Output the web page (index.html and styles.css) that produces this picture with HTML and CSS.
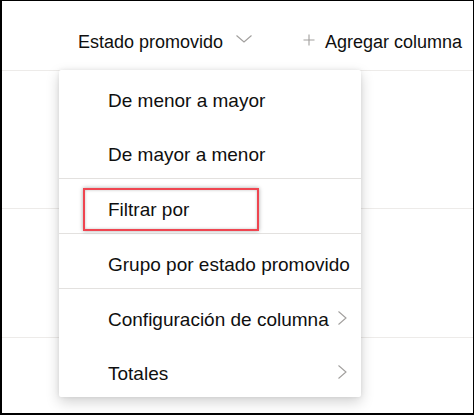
FILE: index.html
```html
<!DOCTYPE html>
<html lang="es">
<head>
<meta charset="utf-8">
<link rel="stylesheet" href="styles.css">
</head>
<body>
<div class="frame">
  <div class="header">
    <div class="col-title">Estado promovido</div>
    <svg class="chev-down" width="16" height="8" viewBox="0 0 16 8"><polyline points="0.5,0.5 8,7 15.5,0.5" fill="none" stroke="#a19f9d" stroke-width="1.1"/></svg>
    <svg class="plus" width="12" height="12" viewBox="0 0 12 12"><path d="M6 0.5V11.5M0.5 6H11.5" fill="none" stroke="#a19f9d" stroke-width="1.1"/></svg>
    <div class="add-col">Agregar columna</div>
  </div>
  <div class="row row-a"></div>
  <div class="row row-b"></div>

  <div class="menu">
    <div class="section">
      <div class="item">De menor a mayor</div>
      <div class="item">De mayor a menor</div>
    </div>
    <div class="section">
      <div class="item">Filtrar por</div>
    </div>
    <div class="section">
      <div class="item">Grupo por estado promovido</div>
    </div>
    <div class="section">
      <div class="item">Configuración de columna<svg class="chev-right" width="9" height="14" viewBox="0 0 9 14"><polyline points="0.5,0.5 8,7 0.5,13.5" fill="none" stroke="#a19f9d" stroke-width="1.1"/></svg></div>
      <div class="item">Totales<svg class="chev-right" width="9" height="14" viewBox="0 0 9 14"><polyline points="0.5,0.5 8,7 0.5,13.5" fill="none" stroke="#a19f9d" stroke-width="1.1"/></svg></div>
    </div>
  </div>
  <div class="highlight"></div>
</div>
</body>
</html>
```
FILE: styles.css
```css
* { box-sizing: border-box; }
html, body { margin: 0; padding: 0; background: #fff; }
body {
  font-family: "Liberation Sans", Arial, sans-serif;
  color: #0f0f0f;
}
.frame {
  position: relative;
  width: 474px;
  height: 415px;
  border-style: solid;
  border-color: #000;
  border-width: 1px 1px 2px 2px;
  overflow: hidden;
  background: #fff;
}
.header {
  height: 70px;
  border-bottom: 1px solid #edebe9;
  display: flex;
  align-items: flex-start;
  padding-top: 31px;
  padding-left: 76px;
  font-size: 18px;
  white-space: nowrap;
}
.col-title {
  width: 146px;
  overflow: hidden;
}
.chev-down {
  margin-left: 12px;
  margin-top: 3px;
  flex: none;
}
.plus {
  margin-left: 51px;
  margin-top: 2px;
  flex: none;
}
.add-col {
  margin-left: 10px;
}
.row { border-bottom: 1px solid #edebe9; }
.row-a { height: 138px; }
.row-b { height: 129px; }

.menu {
  position: absolute;
  left: 57px;
  top: 69px;
  width: 302px;
  background: #fff;
  border-radius: 2px;
  box-shadow: 0 5px 14px rgba(0, 0, 0, 0.18), 0 0 4px rgba(0, 0, 0, 0.08);
  font-size: 19px;
}
.section + .section { border-top: 1px solid #e3e1df; }
.item {
  height: 54px;
  display: flex;
  align-items: center;
  padding-left: 49px;
  padding-top: 7px;
  white-space: nowrap;
}
.chev-right {
  margin-left: auto;
  margin-right: 14px;
  margin-top: -4px;
}
.highlight {
  position: absolute;
  left: 81px;
  top: 187px;
  width: 176px;
  height: 43px;
  border: 2px solid #ef4550;
  box-shadow: 0 0 4px rgba(0, 0, 0, 0.35), inset 0 0 3px rgba(0, 0, 0, 0.25);
}
```
